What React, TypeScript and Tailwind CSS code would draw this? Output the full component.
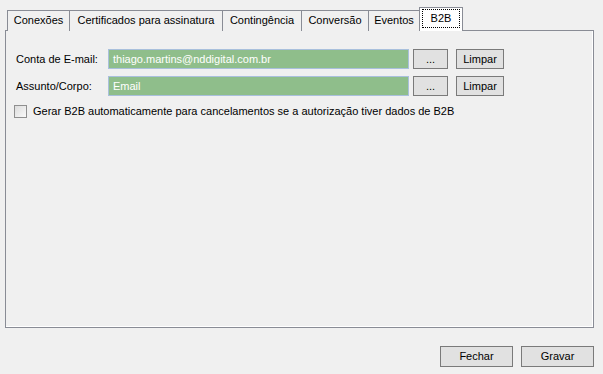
import React from "react";

const tabs = [
  { label: "Conexões", w: "w-[62px]" },
  { label: "Certificados para assinatura", w: "w-[153px]" },
  { label: "Contingência", w: "w-[79px]" },
  { label: "Conversão", w: "w-[67px]" },
  { label: "Eventos", w: "w-[52px]" },
];

function Btn({ children, w, h = "h-[21px]" }: { children: React.ReactNode; w: string; h?: string }) {
  return (
    <div
      className={`${w} ${h} flex items-center justify-center border border-[#7a7a7a] bg-[#e1e1e1] text-black`}
    >
      {children}
    </div>
  );
}

function Field({ label, value }: { label: string; value: string }) {
  return (
    <div className="flex items-center h-[20px]">
      <div className="w-[92px]">{label}</div>
      <div className="w-[301px] h-[20px] border border-[#a9c0dc] bg-[#8fbe8b] text-white flex items-center pl-[4px]">
        {value}
      </div>
      <div className="ml-[4px]">
        <Btn w="w-[35px]" h="h-[20px]">...</Btn>
      </div>
      <div className="ml-[8px]">
        <Btn w="w-[48px]" h="h-[20px]">Limpar</Btn>
      </div>
    </div>
  );
}

export default function App() {
  return (
    <div
      className="w-[603px] h-[374px] bg-[#f0f0f0] text-[11px] leading-none text-black overflow-hidden"
      style={{ fontFamily: '"Liberation Sans", Arial, sans-serif' }}
    >
      <div className="flex items-end pl-[7px] pt-[7px] h-[30px]">
        {tabs.map((t, i) => (
          <div
            key={t.label}
            className={`${t.w} h-[21px] border-t border-l ${i === tabs.length - 1 ? "border-r" : ""} border-[#898c95] bg-[#f0f0f0] flex items-center justify-center mb-[-1px] pb-[1px]`}
          >
            {t.label}
          </div>
        ))}
        <div className="relative z-10 w-[44px] h-[24px] ml-[-1px] border-t border-l border-r border-[#898c95] bg-white flex items-center justify-center mb-[-1px] pb-[2px]">
          <div className="w-[38px] h-[19px] border border-dotted border-black flex items-center justify-center">
            B2B
          </div>
        </div>
      </div>
      <div className="ml-[5px] w-[589px] h-[298px] border border-[#898c95] bg-[#f0f0f0] shadow-[inset_-1px_-1px_0_#ffffff] pl-[10px] pt-[18px]">
        <div className="flex flex-col gap-[7px]">
          <Field label="Conta de E-mail:" value="thiago.martins@nddigital.com.br" />
          <Field label="Assunto/Corpo:" value="Email" />
        </div>
        <div className="flex items-center mt-[9px] ml-[-2px]">
          <div className="w-[13px] h-[13px] border border-[#8f8f8f] bg-gradient-to-br from-[#dcdcdc] to-[#fafafa]" />
          <div className="ml-[6px]">
            Gerar B2B automaticamente para cancelamentos se a autorização tiver dados de B2B
          </div>
        </div>
      </div>
      <div className="flex justify-end gap-[8px] pr-[9px] mt-[18px]">
        <Btn w="w-[73px]">Fechar</Btn>
        <Btn w="w-[73px]">Gravar</Btn>
      </div>
    </div>
  );
}
